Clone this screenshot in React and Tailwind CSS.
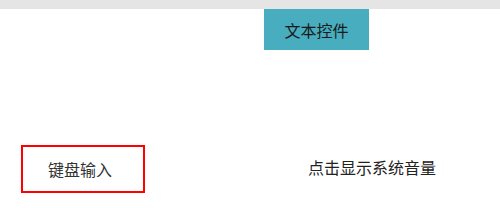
export default function App() {
    return (
        <div className="w-[500px] h-[208px] bg-white overflow-hidden" style={{fontFamily: '"Noto Sans CJK SC", sans-serif'}}>
            <div className="h-[9px] bg-[#e5e5e5]"/>

            <div className="flex">
                <div className="ml-[264px] w-[105px] h-[41px] bg-[#47adbf] flex items-center justify-center text-[16px] text-[#1a1a1a]">
                    文本控件
                </div>
            </div>

            <div className="mt-[95px] flex items-center">
                <div className="ml-[21px] w-[124px] h-[48px] border-2 border-[#ff0000] flex items-center pl-[25px] text-[16px] text-[#333]">
                    键盘输入
                </div>
                <div className="ml-[163px] text-[16px] text-[#222] -mt-[4px]">
                    点击显示系统音量
                </div>
            </div>
        </div>
    );
}
